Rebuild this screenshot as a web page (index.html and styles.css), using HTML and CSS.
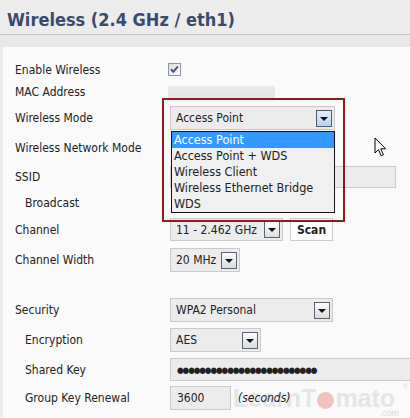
FILE: index.html
```html
<!DOCTYPE html>
<html>
<head>
<meta charset="utf-8">
<link rel="stylesheet" href="styles.css">
</head>
<body>
<div class="page">
  <div class="header"><h1 class="title">Wireless (2.4 GHz / eth1)</h1></div>
  <div class="band"></div>
  <div class="panel">
    <div class="row r-enable">
      <div class="label">Enable Wireless</div>
      <div class="ctl">
        <svg class="check" width="13" height="13" viewBox="0 0 13 13">
          <defs><linearGradient id="cb" x1="0" y1="0" x2="1" y2="1"><stop offset="0" stop-color="#dcdcdc"/><stop offset="1" stop-color="#ffffff"/></linearGradient></defs>
          <rect x="0.5" y="0.5" width="12" height="12" fill="url(#cb)" stroke="#8c97a6"/>
          <path d="M3 6.2 L5.3 8.8 L10 3.4" fill="none" stroke="#3c4a78" stroke-width="1.8"/>
        </svg>
      </div>
    </div>
    <div class="row r-mac">
      <div class="label">MAC Address</div>
      <div class="ctl"><div class="mac"></div></div>
    </div>
    <div class="row r-mode">
      <div class="label">Wireless Mode</div>
      <div class="ctl">
        <div class="sel sel-mode focus">
          <span class="sel-text">Access Point</span>
          <span class="arrow blue"><span class="tri"></span></span>
          <div class="list">
            <div class="opt active">Access Point</div>
            <div class="opt">Access Point + WDS</div>
            <div class="opt">Wireless Client</div>
            <div class="opt">Wireless Ethernet Bridge</div>
            <div class="opt">WDS</div>
          </div>
          <div class="redbox"></div>
        </div>
      </div>
      <svg class="cursor" width="14" height="21" viewBox="0 0 14 21">
        <path d="M1 1 L1 16 L4.5 12.6 L7.2 18.8 L9.4 17.8 L6.8 11.8 L11.6 11.8 Z" fill="#fff" stroke="#000" stroke-width="1" stroke-linejoin="round"/>
      </svg>
    </div>
    <div class="row r-netmode">
      <div class="label">Wireless Network Mode</div>
    </div>
    <div class="row r-ssid">
      <div class="label">SSID</div>
      <div class="ctl"><div class="input in-ssid"></div></div>
    </div>
    <div class="row r-bcast">
      <div class="label sub">Broadcast</div>
    </div>
    <div class="row r-chan">
      <div class="label">Channel</div>
      <div class="ctl">
        <div class="sel sel-chan"><span class="sel-text">11 - 2.462 GHz</span><span class="arrow"><span class="tri"></span></span></div>
        <div class="btn">Scan</div>
      </div>
    </div>
    <div class="row r-width">
      <div class="label">Channel Width</div>
      <div class="ctl"><div class="sel sel-width"><span class="sel-text">20 MHz</span><span class="arrow"><span class="tri"></span></span></div></div>
    </div>
    <div class="row r-sec">
      <div class="label">Security</div>
      <div class="ctl"><div class="sel sel-sec"><span class="sel-text">WPA2 Personal</span><span class="arrow"><span class="tri"></span></span></div></div>
    </div>
    <div class="row r-enc">
      <div class="label sub">Encryption</div>
      <div class="ctl"><div class="sel sel-enc"><span class="sel-text">AES</span><span class="arrow"><span class="tri"></span></span></div></div>
    </div>
    <div class="row r-key">
      <div class="label sub">Shared Key</div>
      <div class="ctl"><div class="input in-key"><span class="dots">●●●●●●●●●●●●●●●●●●●●●●●●●</span></div></div>
    </div>
    <div class="row r-renew">
      <div class="label sub">Group Key Renewal</div>
      <div class="ctl">
        <div class="input in-renew">3600</div>
        <span class="unit">(seconds)</span>
      </div>
      <div class="watermark"><span class="wm-word">Learn<span class="wm-t">T</span><span class="wm-o"></span>mato</span><span class="wm-reg">®</span><span class="wm-com">.com</span></div>
    </div>
  </div>
</div>
</body>
</html>
```
FILE: styles.css
```css
html, body {
  margin: 0;
  padding: 0;
}
body {
  background: #ececec;
  font-family: "DejaVu Sans Condensed", "Liberation Sans", sans-serif;
  font-size: 12px;
  color: #222;
  width: 410px;
  height: 418px;
  overflow: hidden;
}
.page {
  display: flex;
  flex-direction: column;
  height: 418px;
}
.header {
  height: 35px;
  border-bottom: 1px solid #c6c6c6;
  box-sizing: border-box;
  padding: 9px 0 0 7px;
}
.title {
  margin: 0;
  font-family: "DejaVu Sans Condensed", "Liberation Sans", sans-serif;
  font-weight: bold;
  font-size: 18px;
  line-height: 22px;
  color: #3a4a6c;
  letter-spacing: 0;
}
.band {
  height: 12px;
  background: #e8e8e8;
}
.panel {
  flex: 1;
  margin-left: 3px;
  background: #fafafa;
  padding: 14px 0 0 12px;
  display: flex;
  flex-direction: column;
  position: relative;
}
.row {
  display: flex;
  align-items: center;
  height: 24px;
  position: relative;
}
.label {
  width: 155px;
  flex: none;
}
.label.sub {
  padding-left: 10px;
  box-sizing: border-box;
}
.ctl {
  display: flex;
  align-items: center;
}
.r-enable { height: 18px; margin-top: 0; }
.r-enable .ctl { margin-left: -2px; margin-top: -2px; }
.r-mac { height: 18px; margin-top: 4px; }
.r-mode { margin-top: 5px; }
.r-netmode { margin-top: 6px; }
.r-ssid { height: 22px; margin-top: 6px; }
.r-bcast { height: 22px; margin-top: 4px; }
.r-chan { height: 23px; margin-top: 4px; }
.r-width { margin-top: 7px; }
.r-sec { margin-top: 26px; }
.r-enc { margin-top: 6px; }
.r-key { height: 23px; margin-top: 6px; }
.r-renew { margin-top: 5px; }

.check { display: block; }
.mac {
  width: 107px;
  height: 12px;
  margin-left: -2px;
  background: linear-gradient(#ebebeb, #e3e3e3);
}

.sel {
  position: relative;
  display: flex;
  align-items: center;
  justify-content: space-between;
  box-sizing: border-box;
  height: 24px;
  background: #ececec;
  border: 1px solid #cacaca;
  padding: 0 2px 0 5px;
}
.sel-text { white-space: nowrap; }
.sel-mode { width: 165px; }
.sel-chan { width: 113px; height: 23px; }
.sel-width { width: 70px; }
.sel-sec { width: 163px; }
.sel-enc { width: 91px; }
.arrow {
  box-sizing: border-box;
  width: 16px;
  height: 17px;
  border: 1px solid #5a6470;
  background: linear-gradient(#fdfdfd, #dcdcdc);
  display: flex;
  align-items: center;
  justify-content: center;
  flex: none;
}
.arrow.blue {
  border-color: #4e5d6e;
  background: linear-gradient(#e4eef8, #b9d2ea);
}
.tri {
  width: 0;
  height: 0;
  border-left: 4px solid transparent;
  border-right: 4px solid transparent;
  border-top: 4px solid #111;
  margin-top: 1px;
}
.list {
  position: absolute;
  left: 0;
  top: 24px;
  width: 164px;
  box-sizing: border-box;
  border: 1px solid #111;
  background: #f0f0f0;
  z-index: 3;
}
.opt {
  height: 16px;
  line-height: 16px;
  padding-left: 2px;
  white-space: nowrap;
  font-size: 12.5px;
}
.opt.active {
  background: #3399ff;
  color: #fff;
}
.redbox {
  position: absolute;
  left: -9px;
  top: -9px;
  width: 183px;
  height: 124px;
  box-sizing: border-box;
  border: 2px solid #8e1c1f;
  z-index: 4;
  pointer-events: none;
}
.cursor {
  position: absolute;
  left: 359px;
  top: 31px;
  z-index: 5;
}
.input {
  box-sizing: border-box;
  background: #ececec;
  border: 1px solid #cccccc;
  height: 24px;
  display: flex;
  align-items: center;
  padding-left: 6px;
}
.in-ssid { width: 226px; height: 22px; }
.in-key { width: 260px; height: 23px; }
.in-renew { width: 61px; }
.dots {
  font-size: 8.5px;
  letter-spacing: -1.1px;
  color: #222;
}
.btn {
  margin-left: 7px;
  box-sizing: border-box;
  width: 43px;
  height: 23px;
  background: #fdfdfd;
  border: 1px solid #cccccc;
  display: flex;
  align-items: center;
  justify-content: center;
  font-weight: bold;
}
.unit {
  margin-left: 7px;
  font-style: italic;
  position: relative;
  z-index: 2;
}
.watermark {
  position: absolute;
  left: 218px;
  top: -1px;
  width: 176px;
  height: 32px;
  z-index: 1;
  color: #e6e6e6;
  font-family: "Liberation Sans", sans-serif;
  font-weight: bold;
  font-size: 25px;
  line-height: 26px;
  white-space: nowrap;
}
.wm-word { display: inline-flex; align-items: center; }
.wm-o {
  display: inline-block;
  width: 17px;
  height: 17px;
  border-radius: 50%;
  background: #f0c4be;
  margin: 5px 1px 0 1px;
}
.wm-reg {
  position: absolute;
  right: 0;
  top: -3px;
  font-size: 8px;
  font-weight: normal;
  line-height: 10px;
  color: #e0e0e0;
}
.wm-com {
  position: absolute;
  right: 10px;
  top: 24px;
  font-size: 9px;
  line-height: 9px;
  font-weight: normal;
  color: #dadada;
}
```
